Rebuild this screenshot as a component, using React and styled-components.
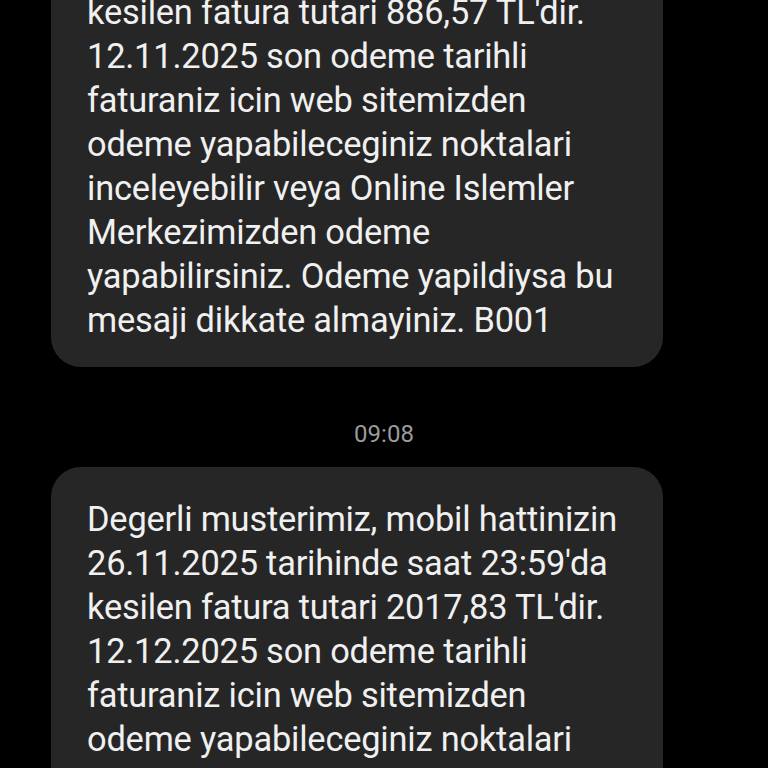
import styled, { createGlobalStyle } from "styled-components";

const GlobalStyle = createGlobalStyle`
  html, body {
    margin: 0;
    padding: 0;
    background: #000;
    overflow: hidden;
  }
`;

const Screen = styled.div`
  width: 768px;
  height: 768px;
  overflow: hidden;
  background: #000;
  font-family: Roboto, "Noto Sans", sans-serif;
`;

const Thread = styled.div`
  display: flex;
  flex-direction: column;
  margin-top: -128px;
`;

const Bubble = styled.div`
  width: 612px;
  margin-left: 51px;
  box-sizing: border-box;
  background: #262626;
  border-radius: 30px;
  padding: 30px 10px 25px 36px;
  color: #f0f0f0;
  font-size: 34.4px;
  line-height: 44px;
  letter-spacing: -0.2px;
`;

const Line = styled.div`
  white-space: nowrap;
`;

const Stamp = styled.div`
  text-align: center;
  color: #9a9a9a;
  font-size: 24px;
  line-height: 26px;
  padding: 54px 0 20px;
`;

const first = [
  "Degerli musterimiz, mobil hattinizin",
  "26.10.2025 tarihinde saat 23:59'da",
  "kesilen fatura tutari 886,57 TL'dir.",
  "12.11.2025 son odeme tarihli",
  "faturaniz icin web sitemizden",
  "odeme yapabileceginiz noktalari",
  "inceleyebilir veya Online Islemler",
  "Merkezimizden odeme",
  "yapabilirsiniz. Odeme yapildiysa bu",
  "mesaji dikkate almayiniz. B001",
];

const second = [
  "Degerli musterimiz, mobil hattinizin",
  "26.11.2025 tarihinde saat 23:59'da",
  "kesilen fatura tutari 2017,83 TL'dir.",
  "12.12.2025 son odeme tarihli",
  "faturaniz icin web sitemizden",
  "odeme yapabileceginiz noktalari",
  "inceleyebilir veya Online Islemler",
  "Merkezimizden odeme",
  "yapabilirsiniz. Odeme yapildiysa bu",
  "mesaji dikkate almayiniz. B001",
];

function Message({ lines }) {
  return (
    <Bubble>
      {lines.map((l, i) => (
        <Line key={i}>{l}</Line>
      ))}
    </Bubble>
  );
}

export default function App() {
  return (
    <Screen>
      <GlobalStyle />
      <Thread>
        <Message lines={first} />
        <Stamp>09:08</Stamp>
        <Message lines={second} />
      </Thread>
    </Screen>
  );
}
